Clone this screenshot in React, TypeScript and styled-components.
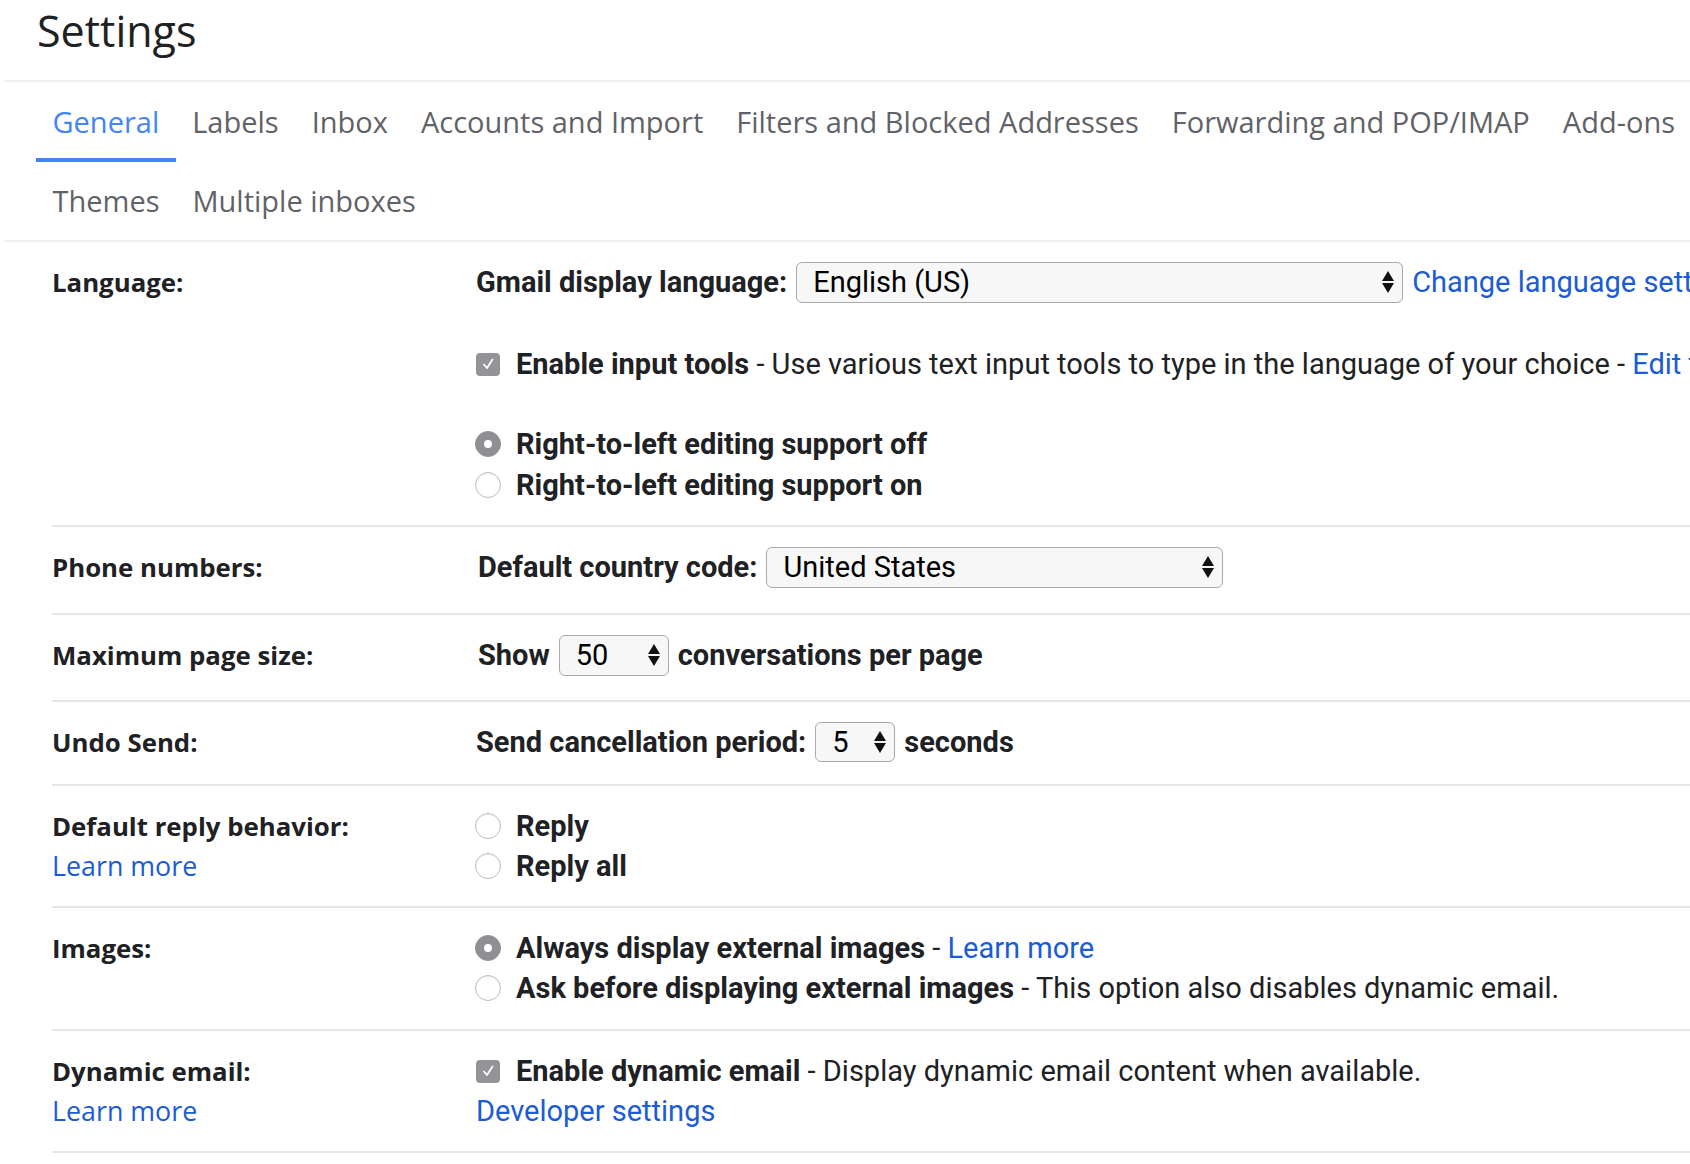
import React from 'react';
import styled, { createGlobalStyle } from 'styled-components';

const GlobalStyle = createGlobalStyle`
  html, body { margin: 0; padding: 0; background: #fff; }
  body {
    font-family: Roboto, "Liberation Sans", sans-serif;
    color: #202124;
    overflow: hidden;
  }
`;

const LINK = '#1a5bd6';

const Page = styled.div`
  width: 1690px;
  height: 1164px;
  overflow: hidden;
  background: #fff;
`;

const Header = styled.header`
  margin-left: 4px;
  border-bottom: 2px solid #efefef;
`;

const Title = styled.h1`
  margin: 0;
  padding: 2px 0 21px 33px;
  font-family: "Open Sans", sans-serif;
  font-weight: 400;
  font-size: 43px;
  line-height: 57px;
  color: #202124;
`;

const Tabs = styled.nav`
  margin-left: 4px;
  padding-left: 32px;
  border-bottom: 2px solid #efefef;
`;

const TabRow = styled.div<{ $h: number }>`
  display: flex;
  white-space: nowrap;
  height: ${p => p.$h}px;
  line-height: ${p => p.$h}px;
`;

const Tab = styled.div<{ $active?: boolean }>`
  flex: none;
  padding: 0 16.5px;
  font-family: "Open Sans", sans-serif;
  font-size: 29px;
  color: ${p => (p.$active ? '#4285f4' : '#5f6368')};
  box-shadow: ${p => (p.$active ? 'inset 0 -4px 0 #4285f4' : 'none')};
`;

const Row = styled.section<{ $pb?: number }>`
  display: flex;
  margin-left: 52px;
  padding: 20px 0 ${p => p.$pb ?? 20}px;
  border-bottom: 2px solid #e6e6e6;
`;

const Label = styled.div`
  flex: none;
  width: 424px;
  font-family: "Open Sans", sans-serif;
  font-weight: 700;
  font-size: 25.8px;
  line-height: 40px;
  color: #202124;
  white-space: nowrap;
`;

const LabelLink = styled.a`
  display: block;
  font-weight: 400;
  font-size: 26.8px;
  color: ${LINK};
  text-decoration: none;
`;

const Content = styled.div`
  flex: 1;
  min-width: 0;
  font-size: 29px;
  line-height: 40px;
  white-space: nowrap;
`;

const Line = styled.div<{ $gap?: number }>`
  display: flex;
  align-items: center;
  height: 40px;
  margin-top: ${p => p.$gap ?? 0}px;
`;

const Text = styled.span<{ $indent?: number }>`
  flex: none;
  margin-left: ${p => p.$indent ?? 0}px;
  color: #202124;
`;

const Strong = styled.b`
  font-weight: 700;
`;

const Link = styled.a`
  flex: none;
  color: ${LINK};
  text-decoration: none;
`;

const SelectBox = styled.div<{ $w: number; $h?: number }>`
  flex: none;
  box-sizing: border-box;
  width: ${p => p.$w}px;
  height: ${p => p.$h ?? 41}px;
  margin: 0 9px;
  padding: 0 8px 0 16px;
  display: flex;
  align-items: center;
  justify-content: space-between;
  border: 1.5px solid #a9a9a9;
  border-radius: 6px;
  background: #f7f7f7;
  color: #000;
  font-size: 29px;
`;

const CheckBox = styled.span`
  flex: none;
  width: 24px;
  height: 23px;
  margin-right: 16px;
  border-radius: 4px;
  background: #939398;
  display: inline-flex;
  align-items: center;
  justify-content: center;
`;

const Radio = styled.span<{ $on?: boolean }>`
  flex: none;
  box-sizing: border-box;
  width: 26px;
  height: 26px;
  margin: 0 15px 0 -1px;
  border-radius: 50%;
  display: inline-flex;
  align-items: center;
  justify-content: center;
  background: ${p => (p.$on ? '#8f8f94' : '#fff')};
  border: 1px solid ${p => (p.$on ? '#8f8f94' : '#bdbdbd')};
  box-shadow: ${p => (p.$on ? 'none' : 'inset 0 1px 2px rgba(0,0,0,0.08)')};
`;

const Dot = styled.span`
  width: 8px;
  height: 8px;
  border-radius: 50%;
  background: #fff;
`;

const Arrows = () => (
  <svg width="12" height="22" viewBox="0 0 12 22">
    <polygon points="6,0 12,10 0,10" fill="#111" />
    <polygon points="0,12 12,12 6,22" fill="#111" />
  </svg>
);

const Check = () => (
  <svg width="14" height="14" viewBox="0 0 14 14">
    <polyline points="3,7.5 6,11 11.5,2.5" fill="none" stroke="#fff" strokeWidth="1.8" strokeLinecap="round" strokeLinejoin="round" />
  </svg>
);

const Select = ({ value, w, h }: { value: string; w: number; h?: number }) => (
  <SelectBox $w={w} $h={h}>
    <span>{value}</span>
    <Arrows />
  </SelectBox>
);

const RadioOption = ({ on, children }: { on?: boolean; children: React.ReactNode }) => (
  <>
    <Radio $on={on}>{on && <Dot />}</Radio>
    <Text>{children}</Text>
  </>
);

const topTabs = [
  'General',
  'Labels',
  'Inbox',
  'Accounts and Import',
  'Filters and Blocked Addresses',
  'Forwarding and POP/IMAP',
  'Add-ons',
];
const moreTabs = ['Themes', 'Multiple inboxes'];

export default function App() {
  return (
    <Page>
      <GlobalStyle />
      <Header>
        <Title>Settings</Title>
      </Header>
      <Tabs>
        <TabRow $h={80}>
          {topTabs.map((t, i) => (
            <Tab key={t} $active={i === 0}>{t}</Tab>
          ))}
        </TabRow>
        <TabRow $h={78}>
          {moreTabs.map(t => (
            <Tab key={t}>{t}</Tab>
          ))}
        </TabRow>
      </Tabs>

      <Row>
        <Label>Language:</Label>
        <Content>
          <Line>
            <Text><Strong>Gmail display language:</Strong></Text>
            <Select value="English (US)" w={607} />
            <Link href="#">Change language settings for other Google products</Link>
          </Line>
          <Line $gap={42}>
            <CheckBox><Check /></CheckBox>
            <Text>
              <Strong>Enable input tools</Strong> - Use various text input tools to type in the language of your choice - <Link href="#">Edit tools</Link> - <Link href="#">Learn more</Link>
            </Text>
          </Line>
          <Line $gap={40}>
            <RadioOption on><Strong>Right-to-left editing support off</Strong></RadioOption>
          </Line>
          <Line $gap={1}>
            <RadioOption><Strong>Right-to-left editing support on</Strong></RadioOption>
          </Line>
        </Content>
      </Row>

      <Row $pb={26}>
        <Label>Phone numbers:</Label>
        <Content>
          <Line>
            <Text $indent={2}><Strong>Default country code:</Strong></Text>
            <Select value="United States" w={457} />
          </Line>
        </Content>
      </Row>

      <Row $pb={25}>
        <Label>Maximum page size:</Label>
        <Content>
          <Line>
            <Text $indent={2}><Strong>Show</Strong></Text>
            <Select value="50" w={110} />
            <Text><Strong>conversations per page</Strong></Text>
          </Line>
        </Content>
      </Row>

      <Row $pb={22}>
        <Label>Undo Send:</Label>
        <Content>
          <Line>
            <Text><Strong>Send cancellation period:</Strong></Text>
            <Select value="5" w={80} h={40} />
            <Text><Strong>seconds</Strong></Text>
          </Line>
        </Content>
      </Row>

      <Row>
        <Label>
          Default reply behavior:
          <LabelLink href="#">Learn more</LabelLink>
        </Label>
        <Content>
          <Line>
            <RadioOption><Strong>Reply</Strong></RadioOption>
          </Line>
          <Line>
            <RadioOption><Strong>Reply all</Strong></RadioOption>
          </Line>
        </Content>
      </Row>

      <Row $pb={21}>
        <Label>Images:</Label>
        <Content>
          <Line>
            <RadioOption on>
              <Strong>Always display external images</Strong> - <Link href="#">Learn more</Link>
            </RadioOption>
          </Line>
          <Line>
            <RadioOption>
              <Strong>Ask before displaying external images</Strong> - This option also disables dynamic email.
            </RadioOption>
          </Line>
        </Content>
      </Row>

      <Row>
        <Label>
          Dynamic email:
          <LabelLink href="#">Learn more</LabelLink>
        </Label>
        <Content>
          <Line>
            <CheckBox><Check /></CheckBox>
            <Text>
              <Strong>Enable dynamic email</Strong> - Display dynamic email content when available.
            </Text>
          </Line>
          <Line>
            <Link href="#">Developer settings</Link>
          </Line>
        </Content>
      </Row>
    </Page>
  );
}
